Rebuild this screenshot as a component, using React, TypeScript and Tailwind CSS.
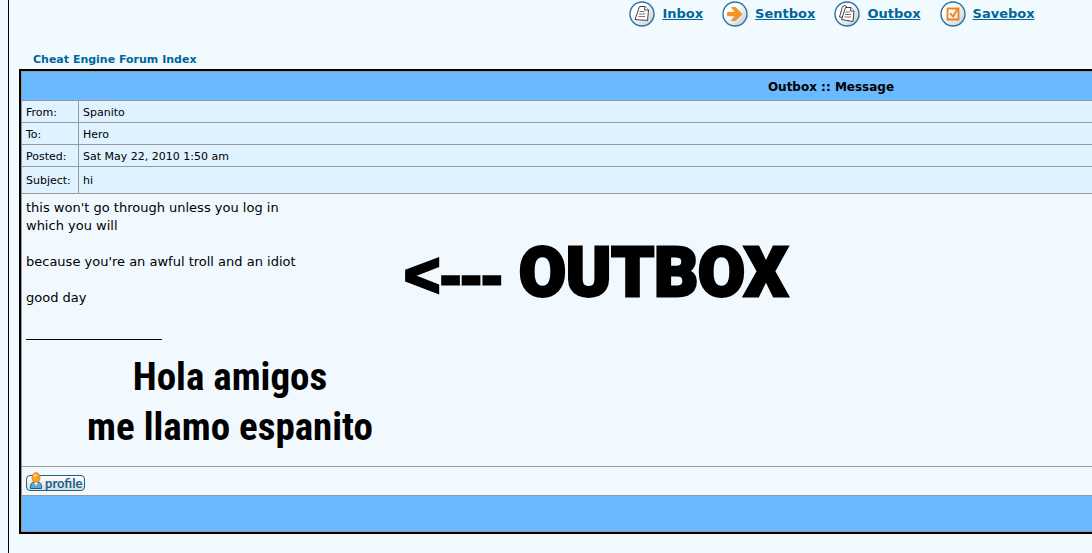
import type { ReactNode } from "react";

const NAV = [
  { name: "Inbox", icon: "page" },
  { name: "Sentbox", icon: "arrow" },
  { name: "Outbox", icon: "pages" },
  { name: "Savebox", icon: "check" },
] as const;

const FIELDS = [
  { label: "From:", value: "Spanito", height: "h-[21px]" },
  { label: "To:", value: "Hero", height: "h-[21px]" },
  { label: "Posted:", value: "Sat May 22, 2010 1:50 am", height: "h-[21px]" },
  { label: "Subject:", value: "hi", height: "h-[26px]" },
];

const GLYPHS: Record<(typeof NAV)[number]["icon"], ReactNode> = {
  page: (
    <g stroke="#444" strokeWidth="1" fill="#fff">
      <path d="M10.5 5.5 L16 5.5 L19.5 9 L18.5 19.5 L6 18.5 Z" />
      <path d="M16 5.5 L15.5 9 L19.5 9" />
      <path d="M10.5 10.5h5M10 13h6.5M9.5 15.5h6.5" stroke="#777" />
    </g>
  ),
  pages: (
    <g stroke="#444" strokeWidth="1" fill="#fff">
      <path d="M8.5 5.5 L11 4.5 L13 6 L12 17 L5.5 16 Z" />
      <path d="M11.5 6.5 L17 6.5 L20 10 L19 20.5 L7.5 18.5 Z" />
      <path d="M17 6.5 L16.5 10 L20 10" />
      <path d="M11.5 11h4.5M11 13.5h6M10.5 16h6.5" stroke="#777" />
    </g>
  ),
  arrow: (
    <path
      d="M5.5 11.3h8l-4-4.800h4l6.500 6.500-6.500 6.500h-4l4-4.800H5.500z"
      fill="#f7941d"
      stroke="#dd7a10"
      strokeWidth="0.6"
    />
  ),
  check: (
    <g fill="none" stroke="#ea8420" strokeWidth="1.8">
      <path d="M7.5 7.500h11v11h-11z" />
      <path d="M10 12l3 3.5 5-8" />
    </g>
  ),
};

function NavIcon({ icon }: { icon: keyof typeof GLYPHS }) {
  return (
    <svg viewBox="0 0 26 26" className="size-[26px]" aria-hidden="true">
      <defs>
        <linearGradient id={`disc-${icon}`} x1="0" y1="0" x2="1" y2="1">
          <stop offset="0.35" stopColor="#fff" />
          <stop offset="1" stopColor="#c4c8cc" />
        </linearGradient>
      </defs>
      <circle cx="13" cy="13" r="12" fill={`url(#disc-${icon})`} stroke="#2b739c" strokeWidth="1.4" />
      {GLYPHS[icon]}
    </svg>
  );
}

function ProfileButton() {
  return (
    <button
      type="button"
      className="relative block h-4 w-[59px] rounded border border-[#1a6285] bg-linear-to-b from-white to-[#d8dde2] pl-[18px] text-left font-['Lato'] text-[13px] leading-3 font-bold text-[#1a6285]"
    >
      <svg viewBox="0 0 14 18" className="absolute bottom-0 left-[2px] h-[18px] w-[14px]" aria-hidden="true">
        <path d="M1.5 16.5C1 12 3 10 5 10h4c2 0 4 2 3.5 6.5z" fill="#64a6cc" stroke="#1a6285" />
        <path d="M5 10l2 4 2-4z" fill="#fff" />
        <ellipse cx="7" cy="5.5" rx="4" ry="4.8" fill="#fba52a" stroke="#c9780e" strokeWidth="0.8" />
        <circle cx="6" cy="3.5" r="1.5" fill="#ffd27a" />
      </svg>
      profile
    </button>
  );
}

export default function App() {
  return (
    <div className="min-h-screen overflow-hidden bg-[#f1faff] pl-2 font-['Verdana','DejaVu_Sans',sans-serif] text-black">
      {/* the forum body is laid out for wide screens and runs off narrow ones */}
      <div className="min-h-screen min-w-[1646px] border-x border-black px-[10px]">
        <nav className="flex h-[53px] justify-center gap-[19px] pl-[2px]">
          {NAV.map((item) => (
            <a
              key={item.name}
              href="#"
              className="flex h-7 items-center gap-[7px] text-[13px] font-bold text-[#006699] underline"
            >
              <NavIcon icon={item.icon} />
              {item.name}
            </a>
          ))}
        </nav>

        <a href="#" className="ml-[14px] block h-4 w-fit text-[11px] leading-[14px] font-bold text-[#006699]">
          Cheat Engine Forum Index
        </a>

        <table className="w-full border-separate border-spacing-px border-2 border-black bg-[#999999] text-[11px] leading-4">
          <thead>
            <tr>
              <th colSpan={2} className="h-7 bg-[#6bb9ff] p-0 pt-px text-xs font-bold">
                Outbox :: Message
              </th>
            </tr>
          </thead>
          <tbody>
            {FIELDS.map((f) => (
              <tr key={f.label} className={f.height}>
                <th scope="row" className="w-14 bg-[#dff2ff] p-0 pt-[2px] pl-1 text-left font-normal">
                  {f.label}
                </th>
                <td className="bg-[#dff2ff] p-0 pt-[2px] pl-1">{f.value}</td>
              </tr>
            ))}
            <tr>
              <td colSpan={2} className="relative h-[272px] bg-[#f1f9ff] p-0 px-1 pt-[5px] align-top text-[13px] leading-[18px]">
                <p>this won't go through unless you log in</p>
                <p>which you will</p>
                <p className="mt-[18px]">because you're an awful troll and an idiot</p>
                <p className="mt-[18px]">good day</p>
                <hr className="mt-8 w-[136px] border-black" />
                <p className="mt-3 w-[408px] text-center font-['Roboto_Condensed','Roboto',sans-serif] text-[39px] leading-[50px] font-bold">
                  Hola amigos
                  <br />
                  me llamo espanito
                </p>
                <strong className="absolute top-[39px] left-[382px] font-['Roboto',sans-serif] text-[68px] leading-[80px] font-black whitespace-nowrap [-webkit-text-stroke:3px_black]">
                  <span className="font-['Liberation_Sans'] text-[62px]">&lt;---</span> OUTBOX
                </strong>
              </td>
            </tr>
            <tr>
              <td colSpan={2} className="h-7 bg-[#f1f9ff] p-0 pt-[3px] pl-1">
                <ProfileButton />
              </td>
            </tr>
            <tr>
              <td colSpan={2} className="h-[35px] bg-[#6bb9ff] p-0" />
            </tr>
          </tbody>
        </table>
      </div>
    </div>
  );
}
